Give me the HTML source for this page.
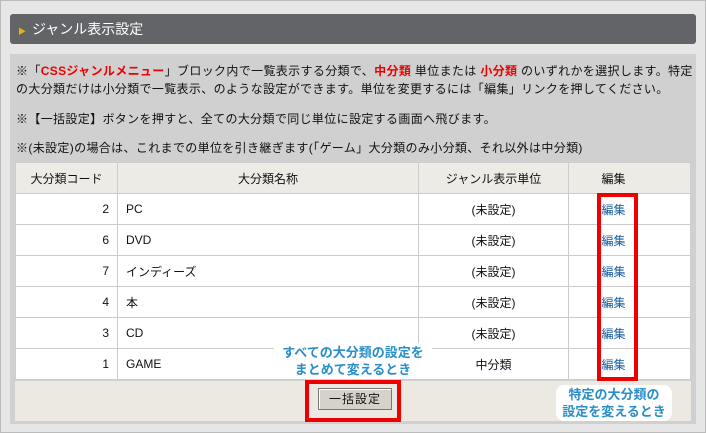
<!DOCTYPE html><html><head><meta charset="utf-8"><style>
body{margin:0;width:706px;height:433px;background:#e8e8e8;font-family:"Liberation Sans","Noto Sans CJK JP",sans-serif;font-size:12px;color:#111;position:relative;overflow:hidden}
.a{position:absolute}
.frame{left:0;top:0;width:704px;height:431px;border:1px solid #bbb;background:#e6e6e6}
.hd{left:10px;top:14px;width:686px;height:30px;background:#636467;border-radius:3px;color:#fff;font-size:14px;line-height:30px}
.info{left:10px;top:54px;width:686px;height:370px;background:#d0d0d0}
.r{color:#e00;font-weight:bold}
.t{letter-spacing:0.35px}
table{position:absolute;left:15px;top:162px;width:676px;border-collapse:collapse;background:#fff}
td{border:1px solid #ccc;height:30px;padding:0 8px;font-size:12px}
tr.h td{background:#ecebe6;text-align:center}
td.n{text-align:right}
td.c{text-align:center}
td.e{text-align:center;padding-right:40px}
a{color:#1a5fa0;text-decoration:none}
.ft{left:15px;top:381px;width:676px;height:40px;background:#ece9e2}
.box{border:4px solid #e00}
.btn{left:318px;top:388px;width:72px;height:20px;background:#d6d2ca;border:1px solid #777;box-shadow:inset 1px 1px #fff;text-align:center;line-height:20px;font-size:12px;letter-spacing:1px}
.cap{color:#2a8fc9;font-weight:bold;font-size:13px;text-align:center;line-height:17px;background:#fff;}
</style></head><body>
<div class="a frame"></div>
<div class="a hd"><span style="color:#e9b400;font-size:8px;margin:0 6px 0 8px">▶</span>ジャンル表示設定</div>
<div class="a info"></div>
<div class="a t" style="left:16px;top:62px;width:680px;line-height:18px">※「<span class="r">CSSジャンルメニュー</span>」ブロック内で一覧表示する分類で、<span class="r">中分類</span> 単位または <span class="r">小分類</span> のいずれかを選択します。特定の大分類だけは小分類で一覧表示、のような設定ができます。単位を変更するには「編集」リンクを押してください。</div>
<div class="a t" style="left:16px;top:110px">※【一括設定】ボタンを押すと、全ての大分類で同じ単位に設定する画面へ飛びます。</div>
<div class="a t" style="left:16px;top:139px">※(未設定)の場合は、これまでの単位を引き継ぎます(「ゲーム」大分類のみ小分類、それ以外は中分類)</div>
<table>
<tr class="h"><td style="width:85px">大分類コード</td><td style="width:284px">大分類名称</td><td style="width:133px">ジャンル表示単位</td><td class="e">編集</td></tr>
<tr><td class="n">2</td><td>PC</td><td class="c">(未設定)</td><td class="e"><a>編集</a></td></tr>
<tr><td class="n">6</td><td>DVD</td><td class="c">(未設定)</td><td class="e"><a>編集</a></td></tr>
<tr><td class="n">7</td><td>インディーズ</td><td class="c">(未設定)</td><td class="e"><a>編集</a></td></tr>
<tr><td class="n">4</td><td>本</td><td class="c">(未設定)</td><td class="e"><a>編集</a></td></tr>
<tr><td class="n">3</td><td>CD</td><td class="c">(未設定)</td><td class="e"><a>編集</a></td></tr>
<tr><td class="n">1</td><td>GAME</td><td class="c">中分類</td><td class="e"><a>編集</a></td></tr>
</table>
<div class="a ft"></div>
<div class="a box" style="left:597px;top:193px;width:33px;height:180px"></div>
<div class="a box" style="left:305px;top:380px;width:88px;height:34px"></div>
<div class="a btn">一括設定</div>
<div class="a cap" style="left:274px;top:343px;width:158px;padding:1px 0">すべての大分類の設定を<br>まとめて変えるとき</div>
<div class="a cap" style="left:556px;top:385px;width:116px;border-radius:8px;padding:1px 0">特定の大分類の<br>設定を変えるとき</div>
</body></html>
